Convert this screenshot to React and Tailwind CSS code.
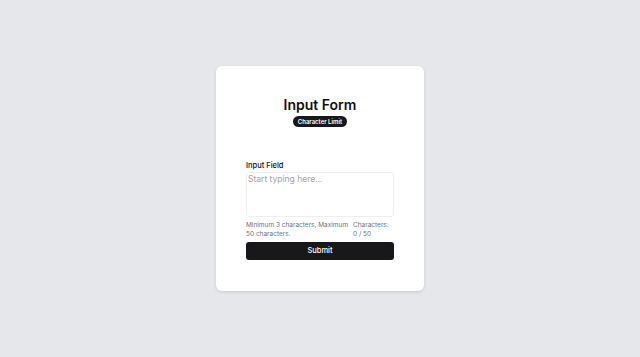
import React, { useState } from 'react';

export default function App() {
  const [value, setValue] = useState('');

  return (
    <div className="min-h-screen w-full bg-[#e5e7eb] flex items-center justify-center font-['Inter',sans-serif]">
      <div className="w-[208px] h-[225px] bg-white rounded-[6px] shadow-[0_1px_3px_rgba(0,0,0,0.12)] px-[30px] pt-[29px] flex flex-col">
        <div className="flex flex-col items-center">
          <h1 className="text-[14px] leading-[20px] font-semibold text-[#111]">Input Form</h1>
          <span className="mt-[1px] bg-[#18181b] text-white text-[6px] leading-[11px] font-semibold px-[5px] rounded-full">
            Character Limit
          </span>
        </div>
        <label className="mt-[34px] text-[7.5px] leading-[10px] font-medium text-[#111]">Input Field</label>
        <textarea
          value={value}
          onChange={(e) => setValue(e.target.value)}
          maxLength={50}
          placeholder="Start typing here..."
          className="mt-[1px] h-[45px] w-full resize-none rounded-[3px] border border-[#eceef1] px-[1px] py-[1px] text-[8.5px] leading-[11px] text-[#111] placeholder:text-[#a1a1aa] outline-none"
        />
        <div className="mt-[4px] flex gap-[2px] text-[6.5px] leading-[9px] text-[#71717a]">
          <p className="w-[105px] whitespace-nowrap">
            Minimum 3 characters, Maximum
            <br />
            50 characters.
          </p>
          <p className="flex-1">Characters: {value.length} / 50</p>
        </div>
        <button
          type="button"
          className="mt-[3px] h-[18px] w-full rounded-[3px] bg-[#18181b] text-white text-[7.5px] font-medium"
        >
          Submit
        </button>
      </div>
    </div>
  );
}
